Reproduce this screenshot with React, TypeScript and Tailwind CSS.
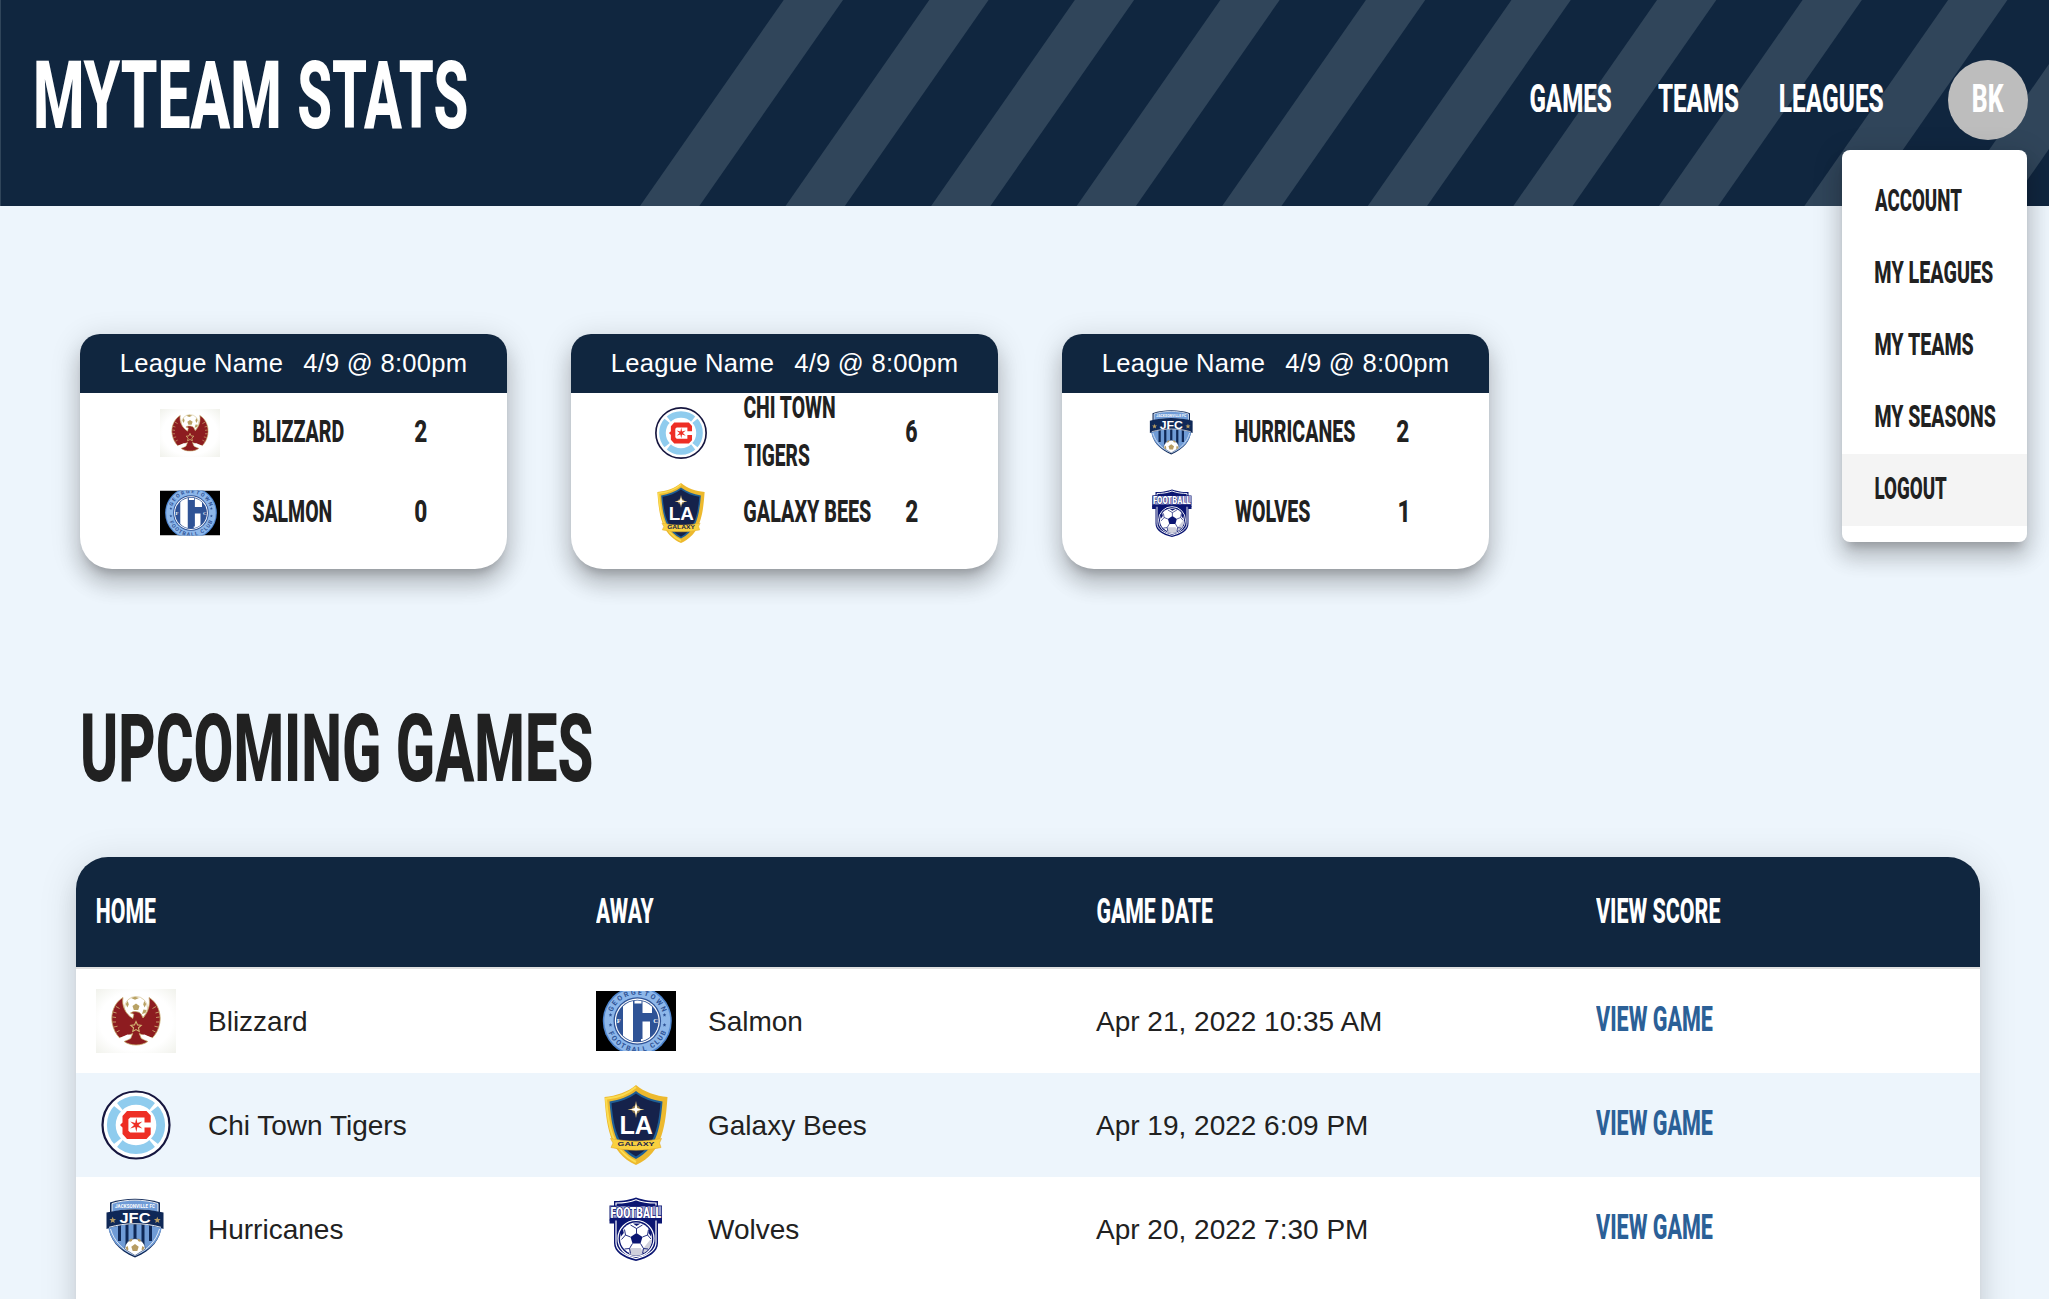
import { useLayoutEffect, useRef, useState } from "react";
import type { ReactNode } from "react";

/** Condensed display lettering: stretches one line of text to the width of its box. */
function Display({ children, className }: { children: string; className: string }) {
  const ref = useRef<HTMLSpanElement>(null);
  const [fit, setFit] = useState({ scale: 0.6, shift: 0 });

  useLayoutEffect(() => {
    const el = ref.current;
    if (!el) return;
    const cs = getComputedStyle(el);
    const ctx = document.createElement("canvas").getContext("2d");
    if (!ctx) return;
    ctx.font = `${cs.fontWeight} ${cs.fontSize} ${cs.fontFamily}`;
    const m = ctx.measureText(children);
    const ink = m.actualBoundingBoxLeft + m.actualBoundingBoxRight;
    const scale = parseFloat(cs.width) / ink;
    setFit({ scale, shift: m.actualBoundingBoxLeft * scale });
  }, [children]);

  return (
    <span
      ref={ref}
      className={`block shrink-0 whitespace-nowrap font-[Roboto,sans-serif] font-extrabold ${className}`}
    >
      <span
        className="block w-max origin-left"
        style={{ transform: `translateX(${fit.shift}px) scaleX(${fit.scale})` }}
      >
        {children}
      </span>
    </span>
  );
}

const STRIPES = [0, 1, 2, 3, 4, 5, 6, 7, 8, 9].map((i) => 640 + i * 145.55);

function HeaderStripes() {
  return (
    <svg className="absolute inset-0 h-full w-full" viewBox="0 0 2049 206" preserveAspectRatio="none" fill="#30455a">
      {STRIPES.map((x) => (
        <polygon key={x} points={`${x},206 ${x + 59.3},206 ${x + 203},0 ${x + 143.7},0`} />
      ))}
      <rect x="0" y="0" width="1" height="206" />
    </svg>
  );
}

type LogoProps = { className: string };

function pts(cx: number, cy: number, n: number, r1: number, r2: number) {
  const out: string[] = [];
  for (let i = 0; i < n * 2; i++) {
    const r = i % 2 ? r2 : r1;
    const a = (Math.PI * i) / n - Math.PI / 2;
    out.push(`${(cx + r * Math.cos(a)).toFixed(2)},${(cy + r * Math.sin(a)).toFixed(2)}`);
  }
  return out.join(" ");
}

function BlizzardLogo({ className }: LogoProps) {
  return (
    <svg className={className} viewBox="0 0 80 80">
      <defs>
        <radialGradient id="bz" cx="50%" cy="50%" r="70%">
          <stop offset="0.65" stopColor="#ffffff" />
          <stop offset="1" stopColor="#f1f2ec" />
        </radialGradient>
      </defs>
      <rect y="8" width="80" height="64" fill="url(#bz)" />
      <circle cx="40" cy="27" r="11.500" fill="#fff" stroke="#d8c89a" strokeWidth="0.800" />
      <polygon points="40,22.500 43.500,25 42.200,29 37.800,29 36.500,25" fill="#b9a264" />
      <path d="M35 17l4-1.300 4 1.300-4 1.800zM29.800 23l2-3 1 3.500-1.500 3zM50.200 23l-2-3-1 3.500 1.500 3zM46 33l3.500-1 1-3-3-.5z" fill="#b9a264" />
      <path
        d="M27 16.500C18.500 21.500 14.500 32 16.200 42c1.200 6.500 4 11.500 7.500 15l8.500-2.500 4.500-2-2 5-6.500 3c3 2.200 7 3.500 11.800 3.500s8.800-1.300 11.800-3.500l-6.500-3-2-5 4.500 2 8.500 2.500c3.500-3.500 6.300-8.500 7.500-15C65.500 32 61.500 21.500 53 16.500 54.500 24 52 31.500 47 37c-1.500-3.500-2.500-6-6.500-6.300-2-.2-3.500-.2-6 1.300l3.300 1.200-1 4.300C29.500 33 25.500 25 27 16.500z"
        fill="#8d1c20"
        stroke="#c7ac6c"
        strokeWidth="0.800"
      />
      <path d="M22.500 57.500l9-4 4 .5-3.500 4.500zM57.500 57.500l-9-4-4 .5 3.500 4.500z" fill="#fff" />
      <path d="M17 31l3.500 1M16.500 36l3.500.5M16.500 41h3.500M18 46l3.500-.8M20.500 51l3-1.500M63 31l-3.500 1M63.500 36l-3.500.5M63.500 41H60M62 46l-3.500-.8M59.500 51l-3-1.500M20 25.500l3.500 2M60 25.500l-3.500 2" stroke="#d3b978" strokeWidth="0.800" />
      <polygon points={pts(40, 46, 5, 5.500, 2.600)} fill="#8d1c20" stroke="#d3b472" strokeWidth="1.100" />
    </svg>
  );
}

function SalmonLogo({ className }: LogoProps) {
  return (
    <svg className={className} viewBox="0 0 80 80">
      <defs>
        <clipPath id="slm">
          <rect y="10" width="80" height="60" />
        </clipPath>
        <clipPath id="slmDisc">
          <circle cx="41.300" cy="40" r="20.500" />
        </clipPath>
        <path id="slmTop" d="M14.800 40a26.500 26.500 0 0 1 53 0" />
        <path id="slmBot" d="M10.300 40a31 31 0 0 0 62 0" />
      </defs>
      <g clipPath="url(#slm)">
        <rect y="10" width="80" height="60" fill="#000" />
        <circle cx="41.300" cy="40" r="34.500" fill="#4f86d0" />
        <circle cx="41.300" cy="40" r="33" fill="#8db7ea" />
        <circle cx="41.300" cy="40" r="23.800" fill="#2f5396" />
        <circle cx="41.300" cy="40" r="22.500" fill="#fff" />
        <circle cx="41.300" cy="40" r="21.300" fill="#2f5396" />
        <g clipPath="url(#slmDisc)">
          <path d="M27 18h10v44H27zM38.500 18h7v4.500h-7zM46.500 18H56v14h-9.500zM46.500 40.500H54v22h-9V58h1.500z" fill="#fff" />
        </g>
        <text x="20.700" y="42" fontSize="6.500" fontWeight="700" fontFamily="Liberation Serif, serif" fill="#fff">F</text>
        <text x="57.200" y="42" fontSize="6.500" fontWeight="700" fontFamily="Liberation Serif, serif" fill="#fff">C</text>
        <text fontSize="7" fontWeight="700" fontFamily="Roboto, sans-serif" fill="#2f5396">
          <textPath href="#slmTop" startOffset="9" textLength="65">GEORGETOWN</textPath>
        </text>
        <text fontSize="7" fontWeight="700" fontFamily="Roboto, sans-serif" fill="#2f5396">
          <textPath href="#slmBot" startOffset="12" textLength="74">FOOTBALL CLUB</textPath>
        </text>
        <g fill="#2f5396">
          <polygon points={pts(14.500, 34, 5, 2, 0.9)} />
          <polygon points={pts(14.500, 44, 5, 2, 0.9)} />
          <polygon points={pts(68.500, 34, 5, 2, 0.9)} />
          <polygon points={pts(68.500, 44, 5, 2, 0.9)} />
        </g>
      </g>
    </svg>
  );
}

function TigersLogo({ className }: LogoProps) {
  return (
    <svg className={className} viewBox="0 0 80 80">
      <circle cx="40" cy="40" r="33.500" fill="#fff" stroke="#16163f" strokeWidth="2.200" />
      <circle cx="40" cy="40" r="24.700" fill="none" stroke="#8fccee" strokeWidth="8.800" />
      <g fill="#fff">
        {[45, 135, 225, 315].map((a) => (
          <path key={a} transform={`rotate(${a} 40 40)`} d="M37.600 9h4.800l-1.400 12h-2z" />
        ))}
      </g>
      <path
        d="M31 26h19.500l4.200 4.500V37.500h-6.200v-5H34.200L32.400 34.300v11.400l1.800 1.800h14.300v-5h6.200v7L50.500 54H31L26.500 49v-6.500L24 40l2.500-2.500V31z"
        fill="#ee2e24"
      />
      <polygon points={pts(40.300, 40, 6, 7, 2.200)} fill="#ee2e24" />
    </svg>
  );
}

function GalaxyLogo({ className }: LogoProps) {
  return (
    <svg className={className} viewBox="0 0 80 80">
      <path d="M40 0C32 7 20 11 8.500 12c2 26 4 56 31.500 68 27.500-12 29.500-42 31.500-68C60 11 48 7 40 0z" fill="#edb92e" />
      <path d="M40 2C32 9 20.500 12.800 10 13.700c2 25 5 51.300 30 63.300" fill="none" stroke="#fbdc50" strokeWidth="2" />
      <path d="M40 6C33 11.500 23.500 15 13.500 16.500 15.500 40 18 63 40 74c22-11 24.500-34 26.500-57.500C56.500 15 47 11.500 40 6z" fill="#1e5f97" />
      <path d="M40 8.500C33 13.500 24.500 16.800 15.500 18.300 17.500 40 20.500 61 40 71.500 59.500 61 62.500 40 64.500 18.300 55.500 16.800 47 13.500 40 8.500z" fill="#15224b" />
      <circle cx="40" cy="24.500" r="4" fill="#c9a24a" opacity="0.600" />
      <polygon points={pts(40, 24.500, 4, 8.500, 1.900)} fill="#f6d37c" />
      <polygon points={pts(40, 24.500, 4, 5.500, 1.700)} fill="#fff" />
      <text x="23.500" y="48.700" textLength="33.500" lengthAdjust="spacingAndGlyphs" fontSize="25" fontWeight="700" fontFamily="Liberation Sans, sans-serif" fill="#fff">LA</text>
      <path d="M14.500 53.500c17 3.500 34 3.500 51 0l-2 4.500 1.500 4.500c-16.500 3.500-33.500 3.500-50 0l2-4.500z" fill="#f9d13f" stroke="#e2a92c" strokeWidth="0.600" />
      <text x="21.500" y="61.200" textLength="37" lengthAdjust="spacingAndGlyphs" fontSize="6" fontWeight="700" fontFamily="Liberation Sans, sans-serif" fill="#15224b">GALAXY</text>
    </svg>
  );
}

function HurricanesLogo({ className }: LogoProps) {
  return (
    <svg className={className} viewBox="0 0 80 80">
      <defs>
        <clipPath id="jfc">
          <path d="M12 37c18-5 36-5 54 0-2 14-10 23-27 30C22 60 14 51 12 37z" />
        </clipPath>
      </defs>
      <path d="M14 13.500c16-5 34-5 50 0v10H14z" fill="#0f2857" />
      <path d="M12.500 36h53C65 50 56 61.500 39 68.500 22 61.500 13 50 12.500 36z" fill="#0f2857" />
      <path d="M16 14.500c15-4.500 31-4.500 46 0v9c-15-4-31-4-46 0z" fill="#6f9bd6" stroke="#fff" strokeWidth="0.900" />
      <text x="19" y="19.300" textLength="40" fontSize="4.500" fontWeight="700" fontFamily="Roboto, sans-serif" fill="#fff">JACKSONVILLE FC</text>
      <g clipPath="url(#jfc)">
        <rect x="10" y="30" width="58" height="40" fill="#6f9bd6" />
        <path d="M22 34h3v18h-3zM29.500 34h3v22h-3zM37.500 34h3v16h-3zM45.500 34h3v22h-3zM53 34h3v18h-3z" fill="#0f2857" />
      </g>
      <path d="M14.500 40C18 52 26 60.500 39 66.500 52 60.500 60 52 63.500 40" fill="none" stroke="#fff" strokeWidth="0.800" />
      <path d="M10.500 23.500c18-4.500 39-4.500 57 0V40l-4-1.500c-16-4.500-33-4.500-49 0l-4 1.500z" fill="#0f2857" />
      <path d="M13 38.300c17-4.800 35-4.800 52 0" fill="none" stroke="#fff" strokeWidth="0.900" />
      <text x="23.500" y="34.300" textLength="31" lengthAdjust="spacingAndGlyphs" fontSize="15.500" fontWeight="700" fontFamily="Liberation Sans, sans-serif" fill="#fff">JFC</text>
      <polygon points={pts(16.700, 31.200, 5, 3.500, 1.500)} fill="#b79c62" />
      <polygon points={pts(61.300, 31.200, 5, 3.500, 1.500)} fill="#b79c62" />
      <path d="M28.700 60a10.300 10.300 0 1 1 20.600 0L39 66.500z" fill="#fff" stroke="#0f2857" strokeWidth="0.500" />
      <path d="M39 55l3.700 2.700-1.400 4.300h-4.600l-1.400-4.300zM33.500 50.500l3-1-.5 2.500-2.500 1zM44.500 50.500l-3-1 .5 2.500 2.500 1zM29.500 58.500l2.200-1.500.8 3.500-1.500 1zM48.500 58.500L46.300 57l-.8 3.500 1.500 1z" fill="#b79c62" />
    </svg>
  );
}

function WolvesLogo({ className }: LogoProps) {
  return (
    <svg className={className} viewBox="0 0 80 80">
      <path d="M18 12c5 0 14-.5 22-3.500 8 3 17 3.500 22 3.500v42c0 9-9 15-22 18-13-3-22-9-22-18z" fill="#0b1672" />
      <path d="M20 14c6 0 14-.8 20-3.300 6 2.500 14 3.300 20 3.300v39.500c0 8-8 13-20 16.200-12-3.200-20-8.200-20-16.200z" fill="none" stroke="#fff" strokeWidth="1.200" />
      <path d="M13.500 16.500h52.500v15H13.500z" fill="#0b1672" />
      <path d="M14.200 17.200h51.100v11.600H14.200z" fill="#9ea3d0" />
      <text x="14.500" y="28.500" textLength="50.500" lengthAdjust="spacingAndGlyphs" fontSize="15" fontWeight="900" fontFamily="Roboto, sans-serif" fill="#fff" stroke="#0b1672" strokeWidth="1.600" paintOrder="stroke">FOOTBALL</text>
      <path d="M13.500 30.500h5v4h-5zM61.500 30.500h4.500v4h-4.500z" fill="#0b1672" />
      <circle cx="40" cy="49.500" r="18" fill="#0b1672" stroke="#fff" strokeWidth="1.200" />
      <circle cx="40" cy="49.500" r="16" fill="#fff" />
      <path d="M46 61l8-10 2 0a16 16 0 0 1-8 13zM34 59h11l2 6a16 16 0 0 1-14 0z" fill="#cfd0dc" />
      <polygon points="40.500,44 46.500,48 44.500,54.500 36.500,54.500 34.500,48" fill="#0b1672" />
      <path d="M40.500 44v-4.500M46.500 48l5-2M44.500 54.500l3 5M36.500 54.500l-3 5M34.500 48l-5-2M40.500 39.500l-6-3.500M40.500 39.500l6-3.500M51.500 46l1-5.500M51.500 46l3.500 4M29.500 46l-1-5.500M29.500 46l-4 4.500M33.500 59.500l-5 .5M47.500 59.500l4.500.5M33.500 59.500l1 5M47.500 59.500l-1 5" stroke="#0b1672" strokeWidth="0.900" fill="none" />
      <path d="M37 34.500h7.500l-4 2.500zM24.500 43l2.500-3 .8 4-2.800 3.500zM55.500 43l-2.500-3-.5 4 2.500 3.500z" fill="#0b1672" />
    </svg>
  );
}

type Line = { text: string; w: string };

const CARDS: {
  rows: { Logo: (p: LogoProps) => ReactNode; lines: Line[]; score: Line }[];
}[] = [
  {
    rows: [
      { Logo: BlizzardLogo, lines: [{ text: "BLIZZARD", w: "w-[91px]" }], score: { text: "2", w: "w-[11.5px]" } },
      { Logo: SalmonLogo, lines: [{ text: "SALMON", w: "w-[78.5px]" }], score: { text: "0", w: "w-[11.5px]" } },
    ],
  },
  {
    rows: [
      {
        Logo: TigersLogo,
        lines: [
          { text: "CHI TOWN", w: "w-[91.5px]" },
          { text: "TIGERS", w: "w-[65.5px]" },
        ],
        score: { text: "6", w: "w-[11.5px]" },
      },
      { Logo: GalaxyLogo, lines: [{ text: "GALAXY BEES", w: "w-[127px]" }], score: { text: "2", w: "w-[11.5px]" } },
    ],
  },
  {
    rows: [
      { Logo: HurricanesLogo, lines: [{ text: "HURRICANES", w: "w-[120px]" }], score: { text: "2", w: "w-[11.5px]" } },
      { Logo: WolvesLogo, lines: [{ text: "WOLVES", w: "w-[75px]" }], score: { text: "1", w: "w-[8px] mr-[1px]" } },
    ],
  },
];

const MENU: Line[] = [
  { text: "ACCOUNT", w: "w-[87px]" },
  { text: "MY LEAGUES", w: "w-[118px]" },
  { text: "MY TEAMS", w: "w-[99px]" },
  { text: "MY SEASONS", w: "w-[120.5px]" },
  { text: "LOGOUT", w: "w-[72px]" },
];

const HEADINGS: Line[] = [
  { text: "HOME", w: "w-[59px] ml-[1px]" },
  { text: "AWAY", w: "w-[58px]" },
  { text: "GAME DATE", w: "w-[116px] ml-[1px]" },
  { text: "VIEW SCORE", w: "w-[124.5px]" },
];

const GAMES = [
  { Home: BlizzardLogo, home: "Blizzard", Away: SalmonLogo, away: "Salmon", date: "Apr 21, 2022 10:35 AM" },
  { Home: TigersLogo, home: "Chi Town Tigers", Away: GalaxyLogo, away: "Galaxy Bees", date: "Apr 19, 2022 6:09 PM" },
  { Home: HurricanesLogo, home: "Hurricanes", Away: WolvesLogo, away: "Wolves", date: "Apr 20, 2022 7:30 PM" },
];

function GameCard({ card }: { card: (typeof CARDS)[number] }) {
  return (
    <article className="h-[235px] w-[427px] rounded-t-[20px] rounded-b-[32px] bg-white shadow-[0_10px_10px_-6px_rgba(0,0,0,0.2),0_16px_20px_2px_rgba(0,0,0,0.14),0_6px_28px_4px_rgba(0,0,0,0.12)]">
      <div className="flex h-[59px] items-center justify-center gap-[20px] rounded-t-[20px] bg-[#10263f] text-[25.6px] tracking-[0.24px] text-white">
        <span>League Name</span>
        <span>4/9 @ 8:00pm</span>
      </div>
      {card.rows.map(({ Logo, lines, score }) => (
        <div key={lines[0].text} className="flex h-[80px] items-center pr-[81px] pl-[80px]">
          <Logo className="h-[60px] w-[60px] shrink-0" />
          <div className="ml-[32.500px] flex-1 pb-[3px]">
            {lines.map((l) => (
              <Display key={l.text} className={`text-[31.5px] leading-[48px] ${l.w}`}>
                {l.text}
              </Display>
            ))}
          </div>
          <Display className={`mb-[3px] text-[31.5px] leading-[48px] ${score.w}`}>{score.text}</Display>
        </div>
      ))}
    </article>
  );
}

export default function App() {
  return (
    <div className="relative h-[1299px] w-full overflow-hidden bg-[#edf5fc] font-['Liberation_Sans',Arial,sans-serif] text-[#212121]">
      <header className="relative h-[206px] bg-[#10263f] text-white">
        <HeaderStripes />
        <div className="relative flex items-start pr-[21px] pl-[35.5px]">
          <h1 className="mt-[48px] flex gap-[20.500px]">
            <Display className="w-[242.500px] text-[95px] leading-[96px]">MYTEAM</Display>
            <Display className="w-[167.500px] text-[95px] leading-[96px]">STATS</Display>
          </h1>
          <nav className="mt-[79px] ml-auto flex items-center">
            <Display className="w-[81.5px] text-[39.4px] leading-[40px]">GAMES</Display>
            <Display className="ml-[46.800px] w-[80.700px] text-[39.4px] leading-[40px]">TEAMS</Display>
            <Display className="ml-[40.500px] w-[103.500px] text-[39.4px] leading-[40px]">LEAGUES</Display>
          </nav>
          <button className="mt-[60px] ml-[65px] flex h-[80px] w-[80px] items-center justify-center rounded-full bg-[#bdbdbd] pb-[2.500px]">
            <Display className="w-[31px] text-[39.4px] leading-[40px]">BK</Display>
          </button>
        </div>
      </header>

      <main>
        <section className="mt-[128px] flex gap-[64px] pl-[80px]">
          {CARDS.map((card) => (
            <GameCard key={card.rows[0].lines[0].text} card={card} />
          ))}
        </section>

        <h2 className="mt-[131.500px] ml-[83px]">
          <Display className="w-[508.500px] text-[95px] leading-[96px]">UPCOMING GAMES</Display>
        </h2>

        <section className="mt-[60.500px] ml-[76px] h-[520px] w-[1904px] rounded-t-[32px] bg-white shadow-[0_10px_10px_-6px_rgba(0,0,0,0.1),0_16px_20px_2px_rgba(0,0,0,0.07),0_6px_36px_4px_rgba(0,0,0,0.1)]">
          <div className="grid h-[112px] grid-cols-[500px_500px_500px_1fr] items-center rounded-t-[32px] border-b-2 border-[#e0e0e0] bg-[#10263f] pb-[3px] pl-[20px] text-white">
            {HEADINGS.map((h) => (
              <Display key={h.text} className={`text-[35.5px] leading-[48px] ${h.w}`}>
                {h.text}
              </Display>
            ))}
          </div>
          {GAMES.map(({ Home, home, Away, away, date }) => (
            <div
              key={home}
              className="grid h-[104px] grid-cols-[500px_500px_500px_1fr] items-center pl-[20px] text-[28px] even:bg-white odd:bg-[#edf5fc]"
            >
              <div className="flex items-center gap-[32px]">
                <Home className="h-[80px] w-[80px]" />
                <span className="pt-[2px]">{home}</span>
              </div>
              <div className="flex items-center gap-[32px]">
                <Away className="h-[80px] w-[80px]" />
                <span className="pt-[2px]">{away}</span>
              </div>
              <span className="pt-[2px]">{date}</span>
              <a className="mb-[4px] text-[#2b6097]">
                <Display className="w-[117px] text-[35.5px] leading-[48px]">VIEW GAME</Display>
              </a>
            </div>
          ))}
        </section>
      </main>

      <ul className="absolute top-[150px] right-[22px] w-[185px] rounded-[8px] bg-white py-[16px] shadow-[0_10px_10px_-6px_rgba(0,0,0,0.2),0_16px_20px_2px_rgba(0,0,0,0.14),0_6px_28px_4px_rgba(0,0,0,0.12)]">
        {MENU.map((m) => (
          <li key={m.text} className="flex h-[72px] items-center pb-[3px] pl-[32.500px] nth-5:bg-[#f4f4f4]">
            <Display className={`text-[31.5px] leading-[48px] ${m.w}`}>{m.text}</Display>
          </li>
        ))}
      </ul>
    </div>
  );
}
